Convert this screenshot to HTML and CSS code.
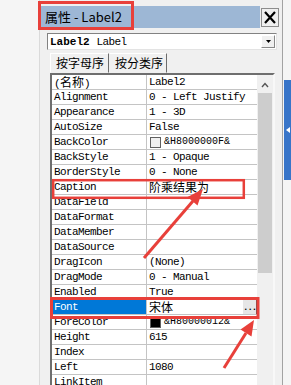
FILE: index.html
```html
<!DOCTYPE html>
<html lang="zh">
<head>
  <meta charset="UTF-8">
  <title>属性 - Label2</title>
  <link rel="stylesheet" href="styles.css">
</head>
<body>
  <div class="desk">
    <div class="gutter"></div>
    <div class="window">
      <div class="titlerow">
        <div class="titlebar">属性 - Label2</div>
        <div class="close">
          <svg width="12" height="13" viewBox="0 0 12 13"><path d="M1 1 L11 12 M11 1 L1 12" stroke="#000" stroke-width="2.2" fill="none"/></svg>
        </div>
      </div>
      <div class="combo">
        <span class="objname">Label2</span><span class="objtype">Label</span>
        <span class="drop"><svg width="5" height="3" viewBox="0 0 5 3"><path d="M0 0 H5 L2.5 3 Z" fill="#000"/></svg></span>
      </div>
      <div class="tabs">
        <div class="tab active">按字母序</div>
        <div class="tab">按分类序</div>
      </div>
      <div class="gridbox">
        <div class="props">
          <div class="row"><div class="name">(<span class="cjk">名称</span>)</div><div class="val">Label2</div></div>
          <div class="row"><div class="name">Alignment</div><div class="val">0 - Left Justify</div></div>
          <div class="row"><div class="name">Appearance</div><div class="val">1 - 3D</div></div>
          <div class="row"><div class="name">AutoSize</div><div class="val">False</div></div>
          <div class="row"><div class="name">BackColor</div><div class="val"><span class="swatch light"></span><span class="hex">&amp;H8000000F&amp;</span></div></div>
          <div class="row"><div class="name">BackStyle</div><div class="val">1 - Opaque</div></div>
          <div class="row"><div class="name">BorderStyle</div><div class="val">0 - None</div></div>
          <div class="row"><div class="name">Caption</div><div class="val"><span class="cjk">阶乘结果为</span></div></div>
          <div class="row"><div class="name">DataField</div><div class="val"></div></div>
          <div class="row"><div class="name">DataFormat</div><div class="val"></div></div>
          <div class="row"><div class="name">DataMember</div><div class="val"></div></div>
          <div class="row"><div class="name">DataSource</div><div class="val"></div></div>
          <div class="row"><div class="name">DragIcon</div><div class="val">(None)</div></div>
          <div class="row"><div class="name">DragMode</div><div class="val">0 - Manual</div></div>
          <div class="row"><div class="name">Enabled</div><div class="val">True</div></div>
          <div class="row"><div class="name sel">Font</div><div class="val"><span class="cjk">宋体</span><span class="dots">...</span></div></div>
          <div class="row"><div class="name">ForeColor</div><div class="val"><span class="swatch dark"></span><span class="hex">&amp;H80000012&amp;</span></div></div>
          <div class="row"><div class="name">Height</div><div class="val">615</div></div>
          <div class="row"><div class="name">Index</div><div class="val"></div></div>
          <div class="row"><div class="name">Left</div><div class="val">1080</div></div>
          <div class="row"><div class="name">LinkItem</div><div class="val"></div></div>
        </div>
        <div class="vscroll">
          <svg class="up" width="8" height="6" viewBox="0 0 8 6"><path d="M1 5 L4 1.5 L7 5" stroke="#555" stroke-width="1.4" fill="none"/></svg>
          <div class="thumb"></div>
        </div>
      </div>
    </div>
    <div class="side">
      <div class="pin"><svg width="4" height="6" viewBox="0 0 4 6"><path d="M4 0 V6 L0 3 Z" fill="#fff"/></svg></div>
    </div>
  </div>

  <!-- red annotation marks drawn over the screenshot -->
  <svg class="marks" width="291" height="385" viewBox="0 0 291 385">
    <g fill="none" stroke="#e8403a">
      <rect x="39.5" y="2.5" width="93" height="26" stroke-width="3"/>
      <rect x="53.2" y="180.2" width="190.6" height="17.6" stroke-width="2.5"/>
      <rect x="51.5" y="298.5" width="206.5" height="19" stroke-width="3"/>
      <path d="M144 258 L193 201" stroke-width="3"/>
      <path d="M224 368 L246 333" stroke-width="3"/>
    </g>
    <g fill="#e8403a">
      <path d="M203 189 L197.5 205.5 L187.5 197 Z"/>
      <path d="M254 320 L251.5 336.5 L240.5 329.5 Z"/>
    </g>
  </svg>
</body>
</html>
```

FILE: styles.css
```css
* { box-sizing: border-box; }
body {
  margin: 0;
  background: #f5f5f5;
  font-family: "Liberation Mono", monospace;
  color: #000;
  overflow: hidden;
}
.desk {
  display: flex;
  height: 385px;
}
.gutter { width: 39px; flex: none; }
.window {
  width: 244px;
  flex: none;
  background: #f0f0f0;
  border-left: 1px solid #dadada;
  border-right: 1px solid #a3a3a3;
  overflow: hidden;
}
.titlerow {
  display: flex;
  align-items: center;
  height: 22px;
  margin-top: 6px;
}
.titlebar {
  width: 220px;
  height: 22px;
  background: #9db7d5;
  font-family: "Noto Sans CJK SC", sans-serif;
  font-size: 13px;
  line-height: 22px;
  padding-left: 5px;
}
.close {
  width: 18px;
  height: 19px;
  margin-left: 1px;
  background: #f0f0f0;
  border: 1px solid #8d8d8d;
  display: flex;
  align-items: center;
  justify-content: center;
}
.close svg { display: block; }
.combo {
  display: flex;
  align-items: center;
  height: 17px;
  margin: 5px 5px 0 7px;
  padding-left: 2px;
  background: #fff;
  border: 1px solid;
  border-color: #828282 #e3e3e3 #e3e3e3 #828282;
}
.objname {
  font-weight: bold;
  font-size: 11px;
}
.objtype {
  font-size: 11px;
  letter-spacing: -0.6px;
  margin-left: 7px;
}
.drop {
  margin-left: auto;
  margin-right: 1px;
  width: 14px;
  height: 13px;
  background: #f0f0f0;
  border: 1px solid;
  border-color: #fff #888 #888 #fff;
  display: flex;
  align-items: center;
  justify-content: center;
}
.drop svg { display: block; }
.tabs {
  display: flex;
  height: 20px;
  margin: 3px 0 0 10px;
}
.tab {
  font-family: "Noto Sans CJK SC", sans-serif;
  font-size: 12px;
  line-height: 18px;
  padding-left: 5px;
  width: 58px;
  border: 1px solid;
  border-color: #fff #6d6d6d transparent transparent;
}
.tab.active {
  width: 59px;
  border-left-color: #fff;
}
.gridbox {
  display: flex;
  width: 225px;
  height: 320px;
  margin-left: 10px;
  border: 2px solid;
  border-color: #6e6e6e #f8f8f8 #f8f8f8 #6e6e6e;
  border-bottom: none;
}
.props {
  width: 205px;
  background: #fff;
}
.row {
  display: flex;
  height: 15px;
  border-bottom: 1px solid #c4c4c4;
}
.name {
  width: 95px;
  flex: none;
  padding-left: 2px;
  border-right: 1px solid #c4c4c4;
  font-size: 11px;
  letter-spacing: -0.6px;
  line-height: 14px;
  white-space: nowrap;
}
.name.sel {
  background: #0078d7;
  color: #fff;
}
.val {
  flex: 1;
  display: flex;
  align-items: center;
  padding-left: 2px;
  font-size: 11px;
  letter-spacing: -0.6px;
  line-height: 14px;
  white-space: pre;
}
.cjk {
  font-family: "Noto Sans CJK SC", sans-serif;
  font-size: 12px;
  letter-spacing: 0;
}
.swatch {
  width: 11px;
  height: 11px;
  margin: 0 3px 0 1px;
  border: 1px solid #606060;
}
.swatch.light { background: #f0f0f0; }
.swatch.dark { background: #000; }
.hex {
  font-size: 10px;
  letter-spacing: 0;
}
.dots {
  margin-left: auto;
  width: 14px;
  height: 14px;
  background: #e6e6e6;
  border-right: 1px solid #555;
  font-size: 9px;
  font-weight: bold;
  letter-spacing: -1px;
  line-height: 16px;
  text-align: center;
}
.vscroll {
  width: 16px;
  background: #f0f0f0;
  display: flex;
  flex-direction: column;
  align-items: center;
}
.up {
  display: block;
  margin-top: 7px;
}
.thumb {
  width: 14px;
  height: 180px;
  margin-top: 5px;
  background: #cdcdcd;
}
.side { width: 8px; flex: none; }
.pin {
  width: 7px;
  height: 100px;
  margin: 80px 0 0 1px;
  background: #3875c9;
  display: flex;
  align-items: center;
  justify-content: center;
}
.pin svg { display: block; }
.marks {
  position: absolute;
  left: 0;
  top: 0;
  pointer-events: none;
}
```
